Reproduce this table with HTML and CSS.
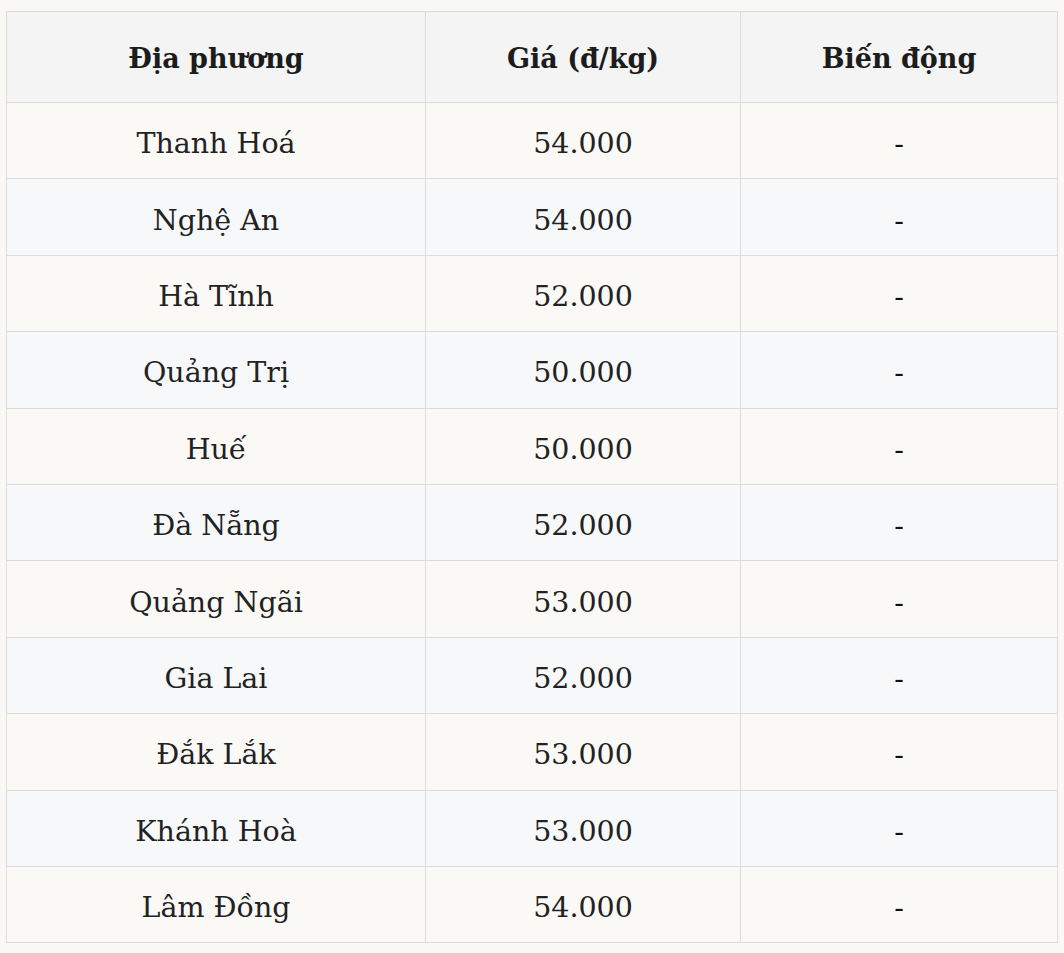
FILE: index.html
```html
<!DOCTYPE html>
<html lang="vi">
<head>
<meta charset="utf-8">
<title>Giá</title>
<link rel="stylesheet" href="styles.css">
</head>
<body>
<div class="wrap">
<table class="price-table">
  <colgroup><col class="c1"><col class="c2"><col class="c3"></colgroup>
  <thead>
    <tr><th>Địa phương</th><th>Giá (đ/kg)</th><th>Biến động</th></tr>
  </thead>
  <tbody>
    <tr><td>Thanh Hoá</td><td>54.000</td><td>-</td></tr>
    <tr><td>Nghệ An</td><td>54.000</td><td>-</td></tr>
    <tr><td>Hà Tĩnh</td><td>52.000</td><td>-</td></tr>
    <tr><td>Quảng Trị</td><td>50.000</td><td>-</td></tr>
    <tr><td>Huế</td><td>50.000</td><td>-</td></tr>
    <tr><td>Đà Nẵng</td><td>52.000</td><td>-</td></tr>
    <tr><td>Quảng Ngãi</td><td>53.000</td><td>-</td></tr>
    <tr><td>Gia Lai</td><td>52.000</td><td>-</td></tr>
    <tr><td>Đắk Lắk</td><td>53.000</td><td>-</td></tr>
    <tr><td>Khánh Hoà</td><td>53.000</td><td>-</td></tr>
    <tr><td>Lâm Đồng</td><td>54.000</td><td>-</td></tr>
  </tbody>
</table>
</div>
</body>
</html>
```
FILE: styles.css
```css
html, body {
  margin: 0;
  padding: 0;
  background: #f9f8f5;
}
.wrap {
  padding: 11px 8px 10px 6px;
}
.price-table {
  width: 1051px;
  border-collapse: collapse;
  font-family: "DejaVu Serif", "Liberation Serif", serif;
  color: #222;
  table-layout: fixed;
}
.c1 { width: 419px; }
.c2 { width: 315px; }
.c3 { width: 317px; }
.price-table th,
.price-table td {
  border: 1px solid #dcdcdc;
  text-align: center;
  vertical-align: middle;
  padding: 0;
}
.price-table th {
  height: 91px;
  padding-top: 3px;
  box-sizing: border-box;
  background: #f4f4f4;
  font-weight: bold;
  font-size: 27px;
  color: #1c1c1c;
}
.price-table td {
  height: 76.4px;
  padding-top: 6px;
  box-sizing: border-box;
  font-size: 28.5px;
}
.price-table tbody tr:nth-child(odd) td { background: #faf9f6; }
.price-table tbody tr:nth-child(even) td { background: #f7f8f9; }
.price-table td:nth-child(3) { color: #111; }
```
